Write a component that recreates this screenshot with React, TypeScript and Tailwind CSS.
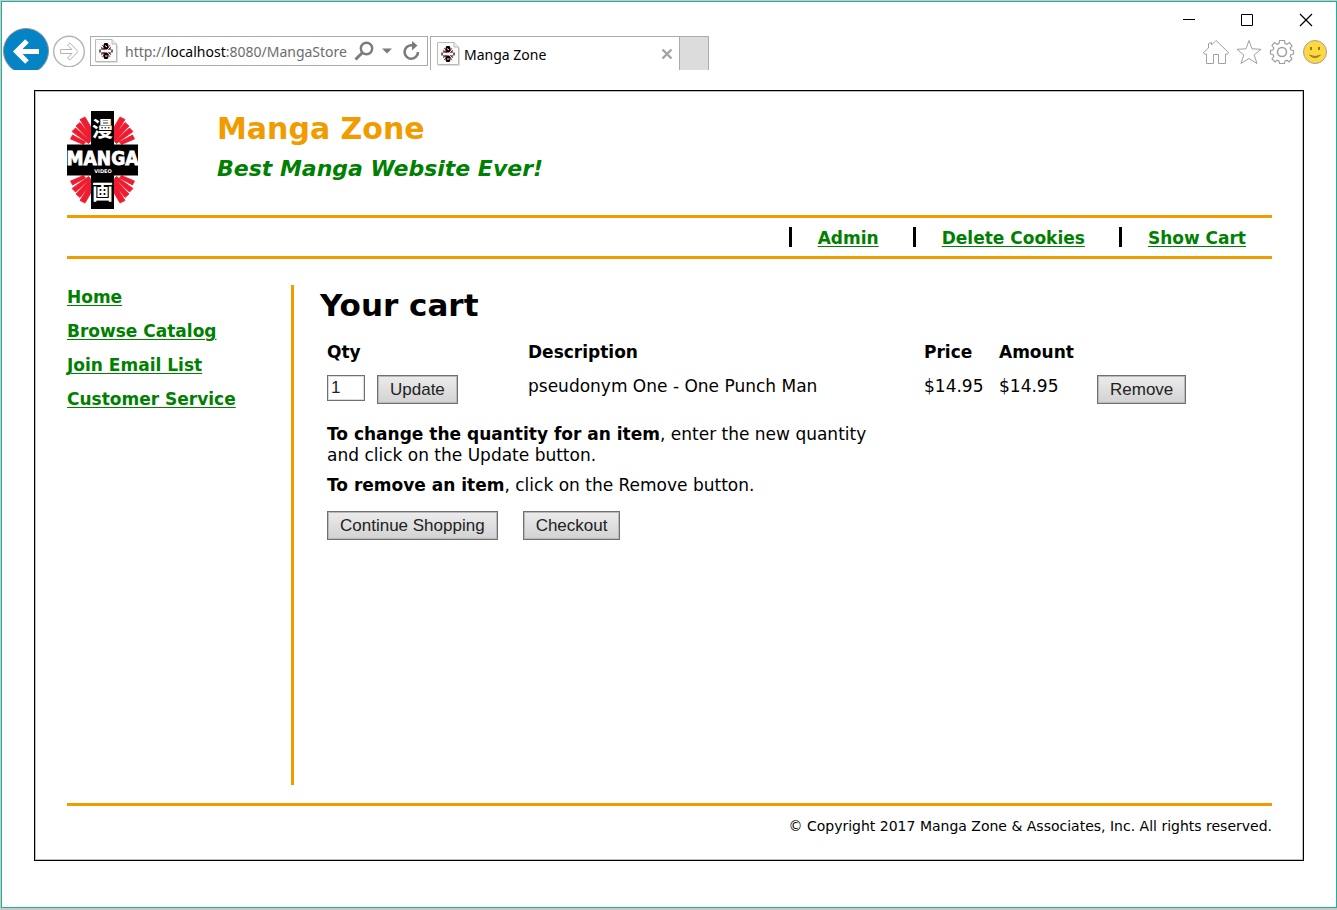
import type { ReactNode } from 'react';

const RAYS = [
  'M13 8.500 L18 6 L24.500 17 L24.500 25 L22.500 24 Z',
  'M9 15 L13 11.500 L24.500 26 L24.500 30 L22 29 Z',
  'M5 20.500 L8.500 17 L23.500 30.500 L21.500 32.500 Z',
  'M3.500 28 L5.500 24 L18.500 31 L16.500 33.500 Z',
];

function RayGroup({ transform }: { transform?: string }) {
  return (
    <g transform={transform} fill="#ee1c2e" stroke="#ee1c2e" strokeWidth=".8" strokeLinejoin="round">
      {RAYS.map((d) => (
        <path key={d} d={d} />
      ))}
    </g>
  );
}

function Logo() {
  return (
    <svg viewBox="0 0 71 98" className="h-[98px] w-[71px] shrink-0" role="img" aria-label="Manga Video">
      <RayGroup />
      <RayGroup transform="translate(71 0) scale(-1 1)" />
      <RayGroup transform="translate(0 98) scale(1 -1)" />
      <RayGroup transform="translate(71 98) scale(-1 -1)" />
      <rect x="24" y="0" width="23" height="98" fill="#000" />
      <rect x="0" y="33.5" width="71" height="31" fill="#000" />
      <g fill="#fff" textAnchor="middle">
        <text x="35.5" y="25" fontSize="21" fontWeight="700" fontFamily="'Noto Sans CJK JP', sans-serif">漫</text>
        <text x="35.5" y="54" fontSize="19" fontWeight="700" fontFamily="'DejaVu Sans Condensed', 'DejaVu Sans', sans-serif" stroke="#fff" strokeWidth="0.8">MANGA</text>
        <text x="36" y="62" fontSize="5" fontWeight="700" fontFamily="'DejaVu Sans', sans-serif">VIDEO</text>
        <text x="35.5" y="88" fontSize="21" fontWeight="700" fontFamily="'Noto Sans CJK JP', sans-serif">画</text>
      </g>
    </svg>
  );
}

function PageIcon() {
  return (
    <svg viewBox="0 0 23 24" className="h-6 w-[23px] shrink-0" aria-hidden="true">
      <path d="M1.5 .5 H17 L21.5 5 V22.5 H.5 V.5 Z" fill="#fbfbfb" stroke="#b9b9b9" />
      <path d="M17 .5 V5 H21.5" fill="#eee" stroke="#b9b9b9" />
      <path d="M1 23.5 H22.5 V6" fill="none" stroke="#ddd" />
      <path d="M6 8 L10 11 M7 6 L10 9 M16 8 L13 11 M15 6 L13 9 M6 16 L10 13 M7 18 L10 15 M16 16 L13 13 M15 18 L13 15" stroke="#e3303c" />
      <path d="M9.500 4 H12.500 L13.500 6 V9 L12 10.500 H10 L8.500 9 V6 Z M9.500 20 H12.500 L13.500 18 V15 L12 13.500 H10 L8.500 15 V18 Z" fill="#000" />
      <path d="M5 10.500 V13.500 M17 10.500 V13.500 M6 10 H9 M14 10 H16 M6 14 H9 M14 14 H16" stroke="#000" strokeWidth="1.200" />
      <path d="M10 6.500 L12 8 M10 17 H12.500" stroke="#fff" />
    </svg>
  );
}

function ChromeButton({ label, className = '', children }: { label: string; className?: string; children: ReactNode }) {
  return (
    <button type="button" aria-label={label} className={`shrink-0 ${className}`}>
      {children}
    </button>
  );
}

function BrowserBar() {
  return (
    <header className="flex h-[68px] shrink-0 justify-between overflow-hidden font-['Noto_Sans',sans-serif] text-sm">
      <div className="flex min-w-0 items-start pt-[26px] pl-px">
        <ChromeButton label="Back">
          <svg viewBox="0 0 46 46" className="size-[46px]">
            <circle cx="23" cy="23" r="22.5" fill="#0483c5" stroke="#8a9298" />
            <path d="M36 23.500 H14 M24 13 L13.500 23.500 L24 34" fill="none" stroke="#fff" strokeWidth="5" />
          </svg>
        </ChromeButton>
        <ChromeButton label="Forward" className="mt-[7px] ml-1">
          <svg viewBox="0 0 32 32" className="size-8">
            <circle cx="16" cy="16.500" r="15.300" fill="none" stroke="#b4b4b4" strokeWidth="1.400" />
            <path d="M7.500 14.500 H19 L14.500 10 L17 8 L25 16.500 L17 25 L14.500 23 L19 18.500 H7.500 Z" fill="none" stroke="#b4b4b4" />
          </svg>
        </ChromeButton>
        <div className="mt-2 ml-[5px] flex h-[30px] w-[338px] items-center border border-[#ababab] pl-1">
          <PageIcon />
          <div className="ml-[7px] w-[229px] pt-px whitespace-nowrap text-[#6d6d6d]">
            http://<span className="text-black">localhost</span>:8080/MangaStore
          </div>
          <ChromeButton label="Search">
            <svg viewBox="0 0 20 20" className="size-5">
              <circle cx="12.500" cy="7.500" r="5.700" fill="none" stroke="#7b7b7b" strokeWidth="2.400" />
              <path d="M8.300 11.700 L1.500 18.500" stroke="#7b7b7b" strokeWidth="3" />
            </svg>
          </ChromeButton>
          <ChromeButton label="Show address list" className="ml-2">
            <svg viewBox="0 0 10 6" className="h-[6px] w-[10px]">
              <path d="M0 .5 H10 L5 5.500 Z" fill="#7b7b7b" />
            </svg>
          </ChromeButton>
          <ChromeButton label="Refresh" className="ml-[10px]">
            <svg viewBox="0 0 20 20" className="size-5">
              <path d="M11.500 4.300 H9 A6.700 6.700 0 1 0 16 11" fill="none" stroke="#7b7b7b" strokeWidth="2.600" />
              <path d="M10 0 L15.500 4.500 L10 9.500 Z" fill="#7b7b7b" />
            </svg>
          </ChromeButton>
        </div>
        <div className="mt-2 ml-[2px] flex h-[34px] w-[250px] items-center border-t border-l border-[#ababab] pl-[6px]">
          <PageIcon />
          <span className="ml-1 flex-1 pt-[2px] text-black">Manga Zone</span>
          <ChromeButton label="Close tab" className="mr-[7px]">
            <svg viewBox="0 0 12 12" className="size-3">
              <path d="M1.500 1.500 L10.500 10.500 M10.500 1.500 L1.500 10.500" stroke="#a3a3a3" strokeWidth="2.400" />
            </svg>
          </ChromeButton>
        </div>
        <button type="button" aria-label="New tab" className="mt-2 -ml-px h-[34px] w-[30px] border border-b-0 border-[#ababab] bg-[#dcdcdc]" />
      </div>

      <div className="flex flex-col items-end text-black">
        <div className="flex gap-[45px] pt-[11px] pr-[23px]">
          <ChromeButton label="Minimize">
            <svg viewBox="0 0 14 14" className="size-[14px]"><path d="M2 6.500 H14" stroke="#000" /></svg>
          </ChromeButton>
          <ChromeButton label="Maximize">
            <svg viewBox="0 0 14 14" className="size-[14px]"><path d="M1.500 1.500 H12.500 V12.500 H1.500 Z" fill="none" stroke="#000" /></svg>
          </ChromeButton>
          <ChromeButton label="Close">
            <svg viewBox="0 0 14 14" className="size-[14px]"><path d="M1 1 L13 13 M13 1 L1 13" stroke="#000" strokeWidth="1.200" /></svg>
          </ChromeButton>
        </div>
        <div className="mt-3 flex gap-[7px] pr-2">
          <ChromeButton label="Home">
            <svg viewBox="0 0 26 26" className="size-[26px]" fill="none" stroke="#a0a0a0">
              <path d="M13 1.500 L25.500 13.500 L24.500 15 H22.500 V24.500 H15.500 V15.500 H10.500 V24.500 H3.500 V15 H1.500 L.5 13.500 L5.500 9 V4.500 L8.500 3.500 V6 Z" />
            </svg>
          </ChromeButton>
          <ChromeButton label="Favorites">
            <svg viewBox="0 0 26 26" className="size-[26px]" fill="none" stroke="#a0a0a0">
              <path d="M13 1.500 L16 9.800 L25 10.300 L18.200 16 L21 24.500 L13 19.500 L5 24.500 L7.800 16 L1 10.300 L10 9.800 Z" />
            </svg>
          </ChromeButton>
          <ChromeButton label="Tools">
            <svg viewBox="0 0 26 26" className="size-[26px]" fill="none" stroke="#a0a0a0" strokeWidth="1.200">
              <path d="M10.500 1.500 H15.500 L16 4.500 L18 5.300 L20.500 3.500 L23 7 L21.200 9 L22 11 L24.500 11.500 V15 L22 15.500 L21.200 17.500 L23 20 L20 23 L18 21.200 L16 22 L15.500 24.500 H10.500 L10 22 L8 21.200 L6 23 L3 20 L4.800 17.500 L4 15.500 L1.500 15 V11.500 L4 11 L4.800 9 L3 6.500 L5.500 3.500 L8 5.300 L10 4.500 Z" />
              <circle cx="13" cy="13" r="4.500" strokeWidth="1.600" />
            </svg>
          </ChromeButton>
          <ChromeButton label="Send a smile">
            <svg viewBox="0 0 26 26" className="size-[26px]">
              <circle cx="13" cy="13" r="11.500" fill="#ffd83f" stroke="#a0a0a0" />
              <path d="M9 8 V11 M17 8 V11" stroke="#8b7a2c" strokeWidth="2" />
              <path d="M7.500 16 Q13 21.500 18.500 16 Q13 19 7.500 16 Z" fill="#8b7a2c" stroke="#8b7a2c" strokeWidth=".8" />
            </svg>
          </ChromeButton>
        </div>
      </div>
    </header>
  );
}

function GreenLink({ children }: { children: ReactNode }) {
  return (
    <a href="#" className="font-bold whitespace-nowrap text-[#008000] underline decoration-1 underline-offset-2">
      {children}
    </a>
  );
}

function FormButton({ children }: { children: ReactNode }) {
  return (
    <button
      type="button"
      className="h-[29px] border border-[#707070] bg-linear-to-b from-[#ececec] to-[#d2d2d2] px-3 pt-px font-['Liberation_Sans',Arial,sans-serif] text-[17px] leading-[26px] whitespace-nowrap text-[#222] shadow-[inset_0_0_0_1px_#b9b9b9]"
    >
      {children}
    </button>
  );
}

const TOP_LINKS = ['Admin', 'Delete Cookies', 'Show Cart'];
const SIDE_LINKS = ['Home', 'Browse Catalog', 'Join Email List', 'Customer Service'];

export default function App() {
  return (
    <div className="flex min-h-screen bg-[#c6cbc9] pt-px pb-[2px] pl-px">
      <div className="flex flex-1 flex-col border border-[#22b09a] bg-white">
        <BrowserBar />
        <div className="mx-8 mt-5 mb-[46px] border border-black pt-5 pr-[31px] pb-[23px] pl-8 font-['DejaVu_Sans',Verdana,sans-serif] text-[17px] leading-[21px] text-black shadow-[inset_0_0_0_1px_#bfbfbf]">
          <div className="flex h-[104px] gap-[79px]">
            <Logo />
            <div>
              <h1 className="text-[30px] leading-9 font-bold text-[#f09c00]">Manga Zone</h1>
              <p className="mt-2 text-[22px] leading-7 font-bold text-[#008000] italic">Best Manga Website Ever!</p>
            </div>
          </div>

          <nav className="border-y-[3px] border-[#f09c00] py-[9px]">
            <ul className="flex h-5 justify-end gap-2 leading-[23px]">
              {TOP_LINKS.map((link) => (
                <li key={link} className="border-l-[3px] border-black px-[26px]">
                  <GreenLink>{link}</GreenLink>
                </li>
              ))}
            </ul>
          </nav>

          <div className="mt-[26px] flex min-h-[500px]">
            <aside className="w-[227px] shrink-0 border-r-[3px] border-[#f09c00] pt-[2px]">
              <ul className="flex flex-col gap-[13px]">
                {SIDE_LINKS.map((link) => (
                  <li key={link}>
                    <GreenLink>{link}</GreenLink>
                  </li>
                ))}
              </ul>
            </aside>

            <main className="min-w-0 flex-1 pl-[26px]">
              <h2 className="text-[31px] leading-10 font-bold">Your cart</h2>
              <table className="mt-4 w-full table-fixed text-left">
                <thead>
                  <tr className="align-top">
                    <th className="w-[201px] pt-px pl-[7px]">Qty</th>
                    <th className="w-[396px] pt-px pl-[7px]">Description</th>
                    <th className="w-[75px] pt-px pl-[7px]">Price</th>
                    <th className="w-[98px] pt-px pl-[7px]">Amount</th>
                    <th className="pt-px pl-[7px]" aria-label="Actions" />
                  </tr>
                </thead>
                <tbody>
                  <tr className="align-top whitespace-nowrap">
                    <td className="pt-3 pl-[7px]">
                      <div className="flex items-start gap-3">
                        <input
                          aria-label="Quantity"
                          defaultValue="1"
                          className="h-[26px] w-[38px] border border-[#707070] px-[3px] font-['Liberation_Sans',Arial,sans-serif] text-[17px] text-[#222] shadow-[inset_0_0_0_1px_#dcdcdc]"
                        />
                        <FormButton>Update</FormButton>
                      </div>
                    </td>
                    <td className="pt-[13px] pl-[7px]">pseudonym One - One Punch Man</td>
                    <td className="pt-[13px] pl-[7px]">$14.95</td>
                    <td className="pt-[13px] pl-[7px]">$14.95</td>
                    <td className="pt-3 pl-[7px]">
                      <FormButton>Remove</FormButton>
                    </td>
                  </tr>
                </tbody>
              </table>

              <div className="max-w-[570px] pt-5 pl-[7px]">
                <p>
                  <b>To change the quantity for an item</b>, enter the new quantity and click on the Update button.
                </p>
                <p className="mt-[9px]">
                  <b>To remove an item</b>, click on the Remove button.
                </p>
                <div className="mt-[15px] flex gap-[25px]">
                  <FormButton>Continue Shopping</FormButton>
                  <FormButton>Checkout</FormButton>
                </div>
              </div>
            </main>
          </div>

          <footer className="mt-[18px] border-t-[3px] border-[#f09c00] pt-[10px] text-right text-sm leading-[21px]">
            © Copyright 2017 Manga Zone &amp; Associates, Inc. All rights reserved.
          </footer>
        </div>
      </div>
    </div>
  );
}
